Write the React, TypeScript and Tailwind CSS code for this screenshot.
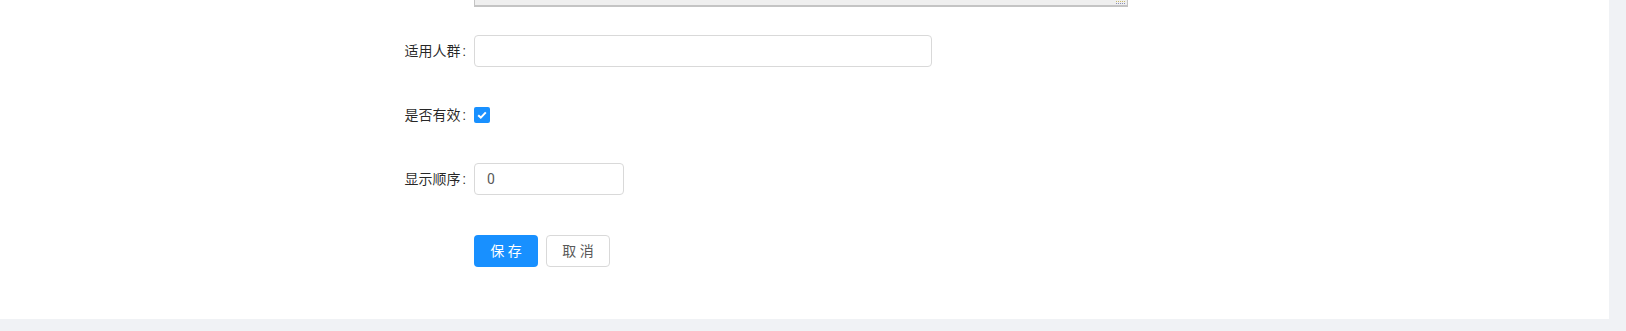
import { useState } from 'react'

const font = "font-['Roboto','Noto_Sans_CJK_SC',sans-serif]"

function Label({ text }: { text: string }) {
  return (
    <div className="w-[474px] shrink-0 pr-[8px] text-right text-[14px] text-[rgba(0,0,0,0.85)] leading-[32px]">
      {text}
      <span className="ml-[2px]">:</span>
    </div>
  )
}

export default function App() {
  const [valid, setValid] = useState(true)

  return (
    <div className={`${font} w-full h-[331px] bg-[#f0f2f5] pr-[17px] pb-[12px]`}>
      <div className="h-full bg-white flex flex-col">
        {/* textarea tail */}
        <div className="flex">
          <div className="w-[474px] shrink-0" />
          <div className="relative w-[654px] h-[7px] flex items-end overflow-hidden">
            <textarea
              disabled
              className="w-full h-[80px] shrink-0 resize-none bg-[#efefef] border border-[#c4c4c4] border-b-[2px]"
            />
            <svg className="absolute right-[3px] bottom-[2px]" width="9" height="6" viewBox="0 0 9 6">
              {[0, 2, 4, 6, 8].map((x) =>
                [0, 2, 4].map((y) => (
                  <rect key={`${x}-${y}`} x={x} y={y} width="1" height="1" fill={y === 4 ? '#8a8fb8' : '#c9b86a'} />
                ))
              )}
            </svg>
          </div>
        </div>

        {/* 适用人群 */}
        <div className="flex mt-[28px]">
          <Label text="适用人群" />
          <input
            className="w-[458px] h-[32px] rounded-[4px] border border-[#d9d9d9] bg-white px-[11px] text-[14px] text-[rgba(0,0,0,0.65)] outline-none"
          />
        </div>

        {/* 是否有效 */}
        <div className="flex mt-[32px]">
          <Label text="是否有效" />
          <div className="h-[32px] flex items-center">
            <button
              onClick={() => setValid(!valid)}
              className={`w-[16px] h-[16px] rounded-[2px] flex items-center justify-center ${
                valid ? 'bg-[#1890ff]' : 'bg-white border border-[#d9d9d9]'
              }`}
            >
              {valid && (
                <svg width="10" height="8" viewBox="0 0 10 8">
                  <path d="M1.2 4.2 L3.8 6.6 L8.8 1.4" fill="none" stroke="white" strokeWidth="2" />
                </svg>
              )}
            </button>
          </div>
        </div>

        {/* 显示顺序 */}
        <div className="flex mt-[32px]">
          <Label text="显示顺序" />
          <input
            defaultValue="0"
            className="w-[150px] h-[32px] rounded-[4px] border border-[#d9d9d9] bg-white px-[12px] text-[14px] text-[#595959] outline-none"
          />
        </div>

        {/* buttons */}
        <div className="flex mt-[40px]">
          <div className="w-[474px] shrink-0" />
          <div className="flex gap-[8px]">
            <button className="w-[64px] h-[32px] rounded-[4px] bg-[#1890ff] text-white text-[14px]">
              保 存
            </button>
            <button className="w-[64px] h-[32px] rounded-[4px] border border-[#d9d9d9] bg-white text-[#595959] text-[14px]">
              取 消
            </button>
          </div>
        </div>
      </div>
    </div>
  )
}
